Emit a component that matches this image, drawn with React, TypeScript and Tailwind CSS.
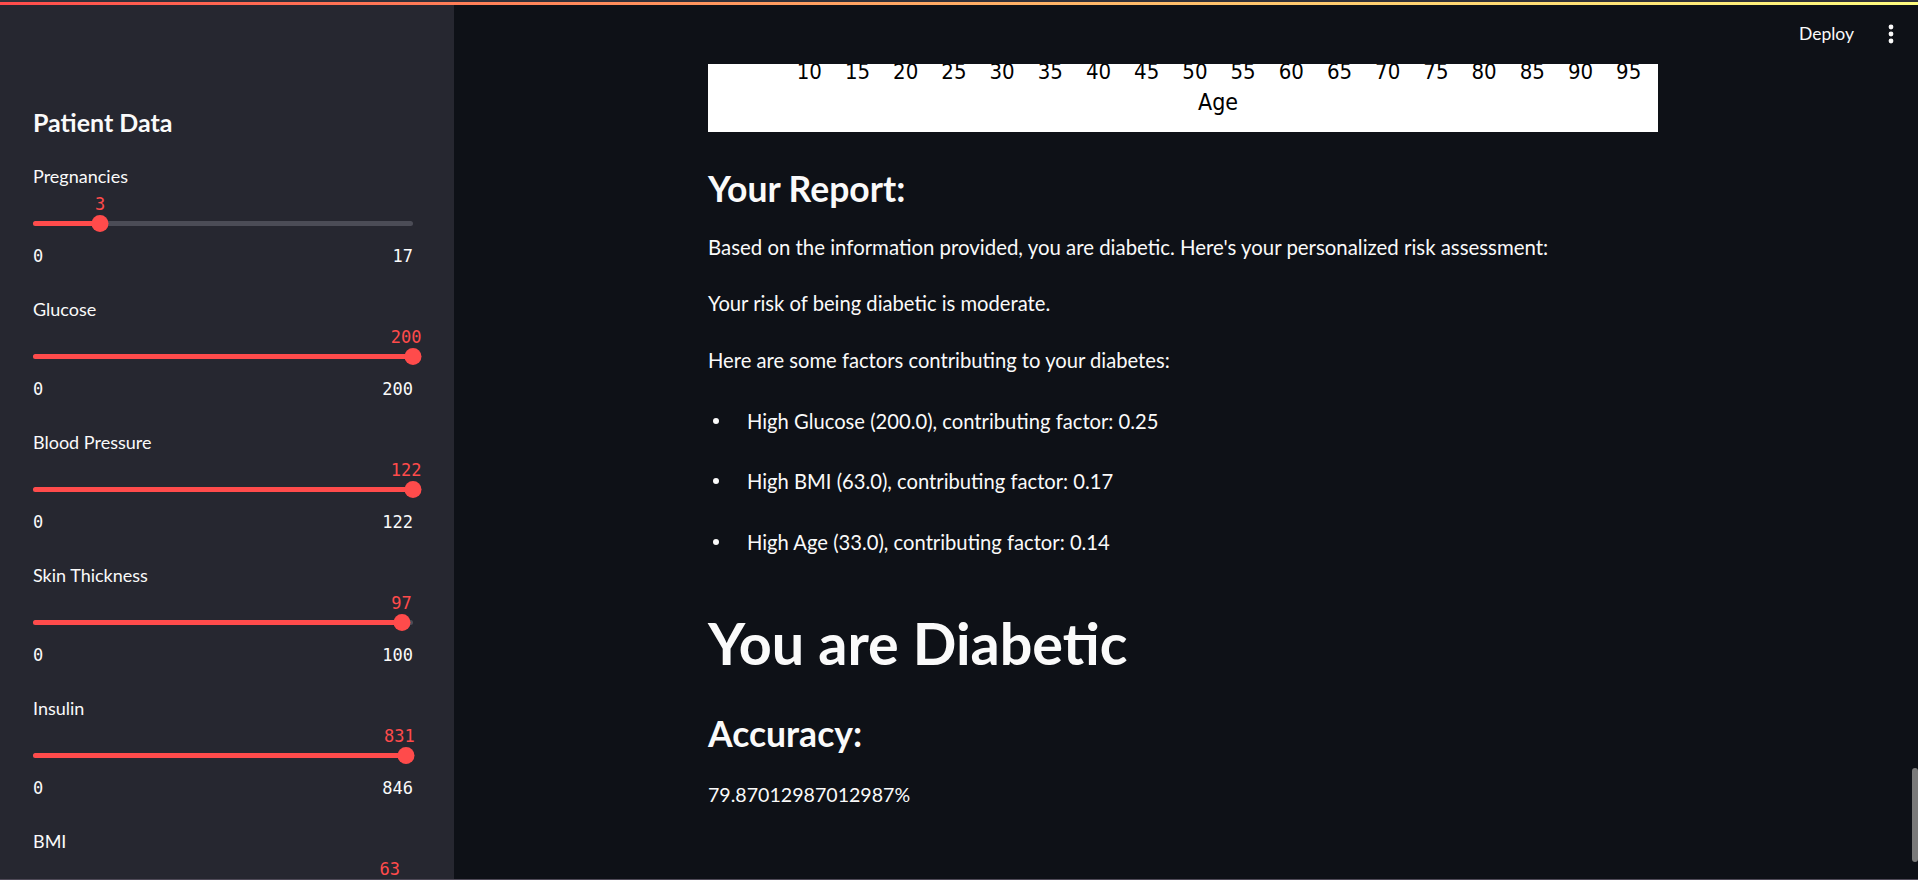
import React from 'react';

type SliderItem = {
  label: string;
  value: number;
  min: number;
  max: number;
  maxLabel: string;
};

const sliders: SliderItem[] = [
  { label: 'Pregnancies', value: 3, min: 0, max: 17, maxLabel: '17' },
  { label: 'Glucose', value: 200, min: 0, max: 200, maxLabel: '200' },
  { label: 'Blood Pressure', value: 122, min: 0, max: 122, maxLabel: '122' },
  { label: 'Skin Thickness', value: 97, min: 0, max: 100, maxLabel: '100' },
  { label: 'Insulin', value: 831, min: 0, max: 846, maxLabel: '846' },
  { label: 'BMI', value: 63, min: 0, max: 67.1, maxLabel: '67' },
];

const TRACK_W = 380;

function Slider({ item }: { item: SliderItem }) {
  const pct = (item.value - item.min) / (item.max - item.min);
  const x = pct * TRACK_W;
  const text = String(item.value);
  // value label sits centred on the thumb unless it would run past the track end
  const alignRight = x + (text.length * 10.5) / 2 > TRACK_W;

  return (
    <div className="h-[133px] w-[380px]">
      <div className="h-[24px] leading-[24px] text-[18px] text-[#fafafa]">{item.label}</div>
      <div className="relative mt-[6px] h-[20px]">
        <span
          className={`absolute top-0 leading-[20px] font-['DejaVu_Sans_Mono',monospace] text-[17px] text-[#ff4b4b] ${
            alignRight ? '-translate-x-full' : '-translate-x-1/2'
          }`}
          style={{ left: alignRight ? x + 8.5 : x }}
        >
          {text}
        </span>
      </div>
      <div className="relative h-[20px]">
        <div className="absolute left-0 right-0 top-[7.5px] h-[5px] rounded-full bg-[#4b4c56]" />
        <div
          className="absolute left-0 top-[7.5px] h-[5px] rounded-full bg-[#ff4b4b]"
          style={{ width: x }}
        />
        <div
          className="absolute top-[1.5px] h-[17px] w-[17px] -translate-x-1/2 rounded-full bg-[#ff4b4b]"
          style={{ left: x }}
        />
      </div>
      <div className="mt-[12px] flex h-[22px] items-center justify-between font-['DejaVu_Sans_Mono',monospace] text-[17px] text-[#fafafa]">
        <span>{item.min}</span>
        <span>{item.maxLabel}</span>
      </div>
    </div>
  );
}

function AgeChart() {
  const ticks = [10, 15, 20, 25, 30, 35, 40, 45, 50, 55, 60, 65, 70, 75, 80, 85, 90, 95];
  return (
    <svg width="950" height="68" className="block bg-white">
      {ticks.map((t, i) => (
        <text
          key={t}
          x={101.3 + i * 48.2}
          y={15}
          textAnchor="middle"
          fontFamily="'DejaVu Sans Condensed', 'DejaVu Sans', sans-serif"
          fontSize="22"
          fill="#000"
        >
          {t}
        </text>
      ))}
      <text
        x={510}
        y={46}
        textAnchor="middle"
        fontFamily="'DejaVu Sans Condensed', 'DejaVu Sans', sans-serif"
        fontSize="23"
        fill="#000"
      >
        Age
      </text>
    </svg>
  );
}

export default function App() {
  const factors = [
    'High Glucose (200.0), contributing factor: 0.25',
    'High BMI (63.0), contributing factor: 0.17',
    'High Age (33.0), contributing factor: 0.14',
  ];

  return (
    <div className="relative flex h-[880px] w-full overflow-hidden bg-[#0e1117] font-['Lato','Noto_Sans',sans-serif] text-[#fafafa]">
      {/* top decoration */}
      <div className="absolute left-0 right-0 top-0 z-20 h-[5px] border-t-2 border-[#30313a] bg-gradient-to-r from-[#ff4b4b] to-[#fffd80]" />

      {/* Sidebar */}
      <aside className="h-full w-[454px] shrink-0 overflow-hidden bg-[#262730] pl-[33px] pt-[106px]">
        <h2 className="h-[32px] text-[25px] font-bold leading-[32px]">Patient Data</h2>
        <div className="mt-[25.5px] flex flex-col">
          {sliders.map((s) => (
            <Slider key={s.label} item={s} />
          ))}
        </div>
      </aside>

      {/* Main */}
      <main className="flex min-w-0 flex-1 flex-col">
        <header className="flex h-[64px] shrink-0 items-start justify-end gap-[26px] pr-[16px] pt-[22px]">
          <span className="text-[17.5px] leading-[24px] text-[#fafafa]">Deploy</span>
          <svg width="22" height="24" viewBox="0 0 22 24">
            <circle cx="11" cy="5" r="2.4" fill="#fafafa" />
            <circle cx="11" cy="12" r="2.4" fill="#fafafa" />
            <circle cx="11" cy="19" r="2.4" fill="#fafafa" />
          </svg>
        </header>

        <div className="pl-[254px]">
          <div className="w-[950px]">
            <AgeChart />

            <h3 className="mt-[36.7px] text-[35.5px] font-bold leading-[40px]">Your Report:</h3>
            <p className="mt-[24.5px] text-[20.4px] leading-[28px]">
              Based on the information provided, you are diabetic. Here's your personalized risk assessment:
            </p>
            <p className="mt-[28.3px] text-[20.2px] leading-[28px]">Your risk of being diabetic is moderate.</p>
            <p className="mt-[28.2px] text-[20.2px] leading-[28px]">Here are some factors contributing to your diabetes:</p>

            <ul className="mt-[33.3px] flex flex-col gap-[32.5px]">
              {factors.map((f) => (
                <li key={f} className="flex h-[28px] items-center text-[20.2px] leading-[28px]">
                  <span className="flex w-[39px] justify-start pl-[5px]">
                    <span className="h-[6px] w-[6px] rounded-full bg-[#fafafa]" />
                  </span>
                  <span>{f}</span>
                </li>
              ))}
            </ul>

            <h1 className="mt-[53.5px] text-[57.5px] font-bold leading-[68px]">You are Diabetic</h1>
            <h3 className="mt-[36.4px] text-[35.5px] font-bold leading-[40px]">Accuracy:</h3>
            <p className="mt-[27px] text-[19.6px] leading-[28px]">79.87012987012987%</p>
          </div>
        </div>
      </main>

      {/* overlay scrollbar */}
      <div className="absolute right-0 top-[768px] h-[94px] w-[6px] rounded-full bg-[#7a7a7a]" />
      <div className="absolute bottom-0 left-0 right-0 h-[1px] bg-[#4f4a58]" />
    </div>
  );
}
